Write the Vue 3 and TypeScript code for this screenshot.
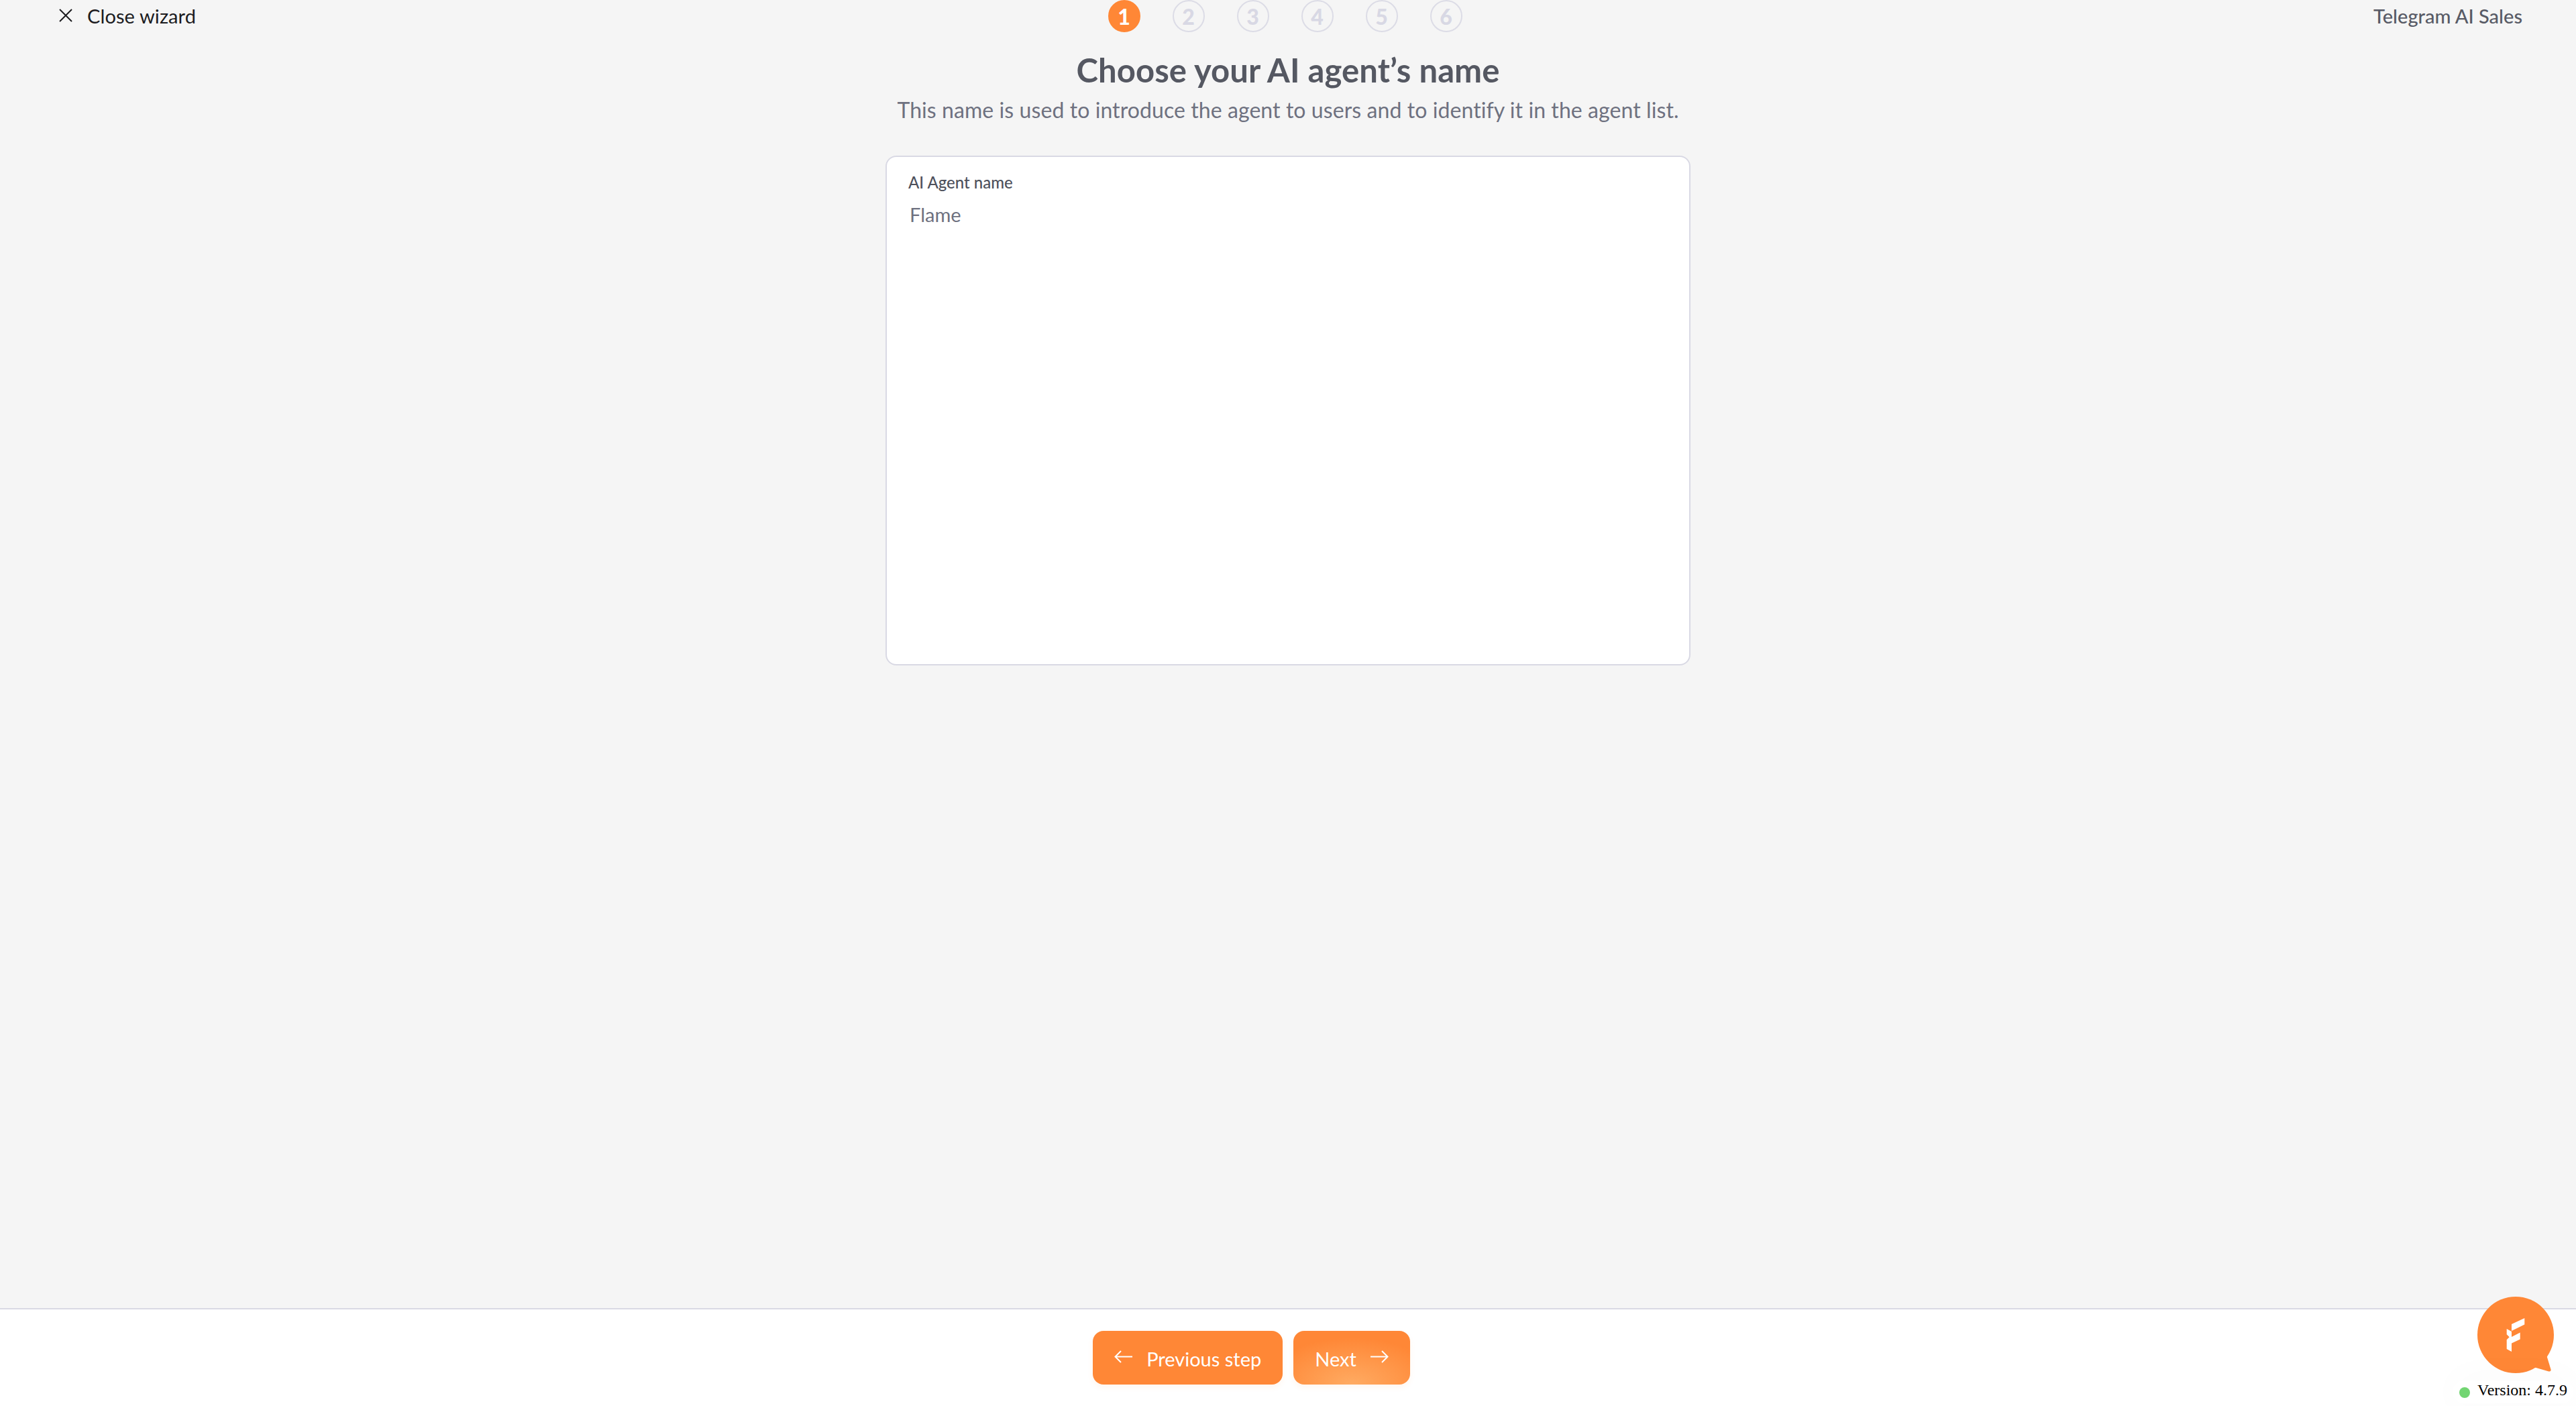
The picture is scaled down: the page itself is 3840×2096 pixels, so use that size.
<script setup lang="ts">
const steps = [1, 2, 3, 4, 5, 6]
</script>

<template>
  <div class="page">
    <header class="top">
      <div class="close">
        <svg class="close-icon" viewBox="0 0 20 20" width="20" height="20">
          <path d="M1 1L19 19M19 1L1 19" stroke="#1c1c1f" stroke-width="2" fill="none" />
        </svg>
        <span class="close-text">Close wizard</span>
      </div>
      <div class="steps">
        <div v-for="s in steps" :key="s" class="step" :class="{ active: s === 1 }">{{ s }}</div>
      </div>
      <div class="product">Telegram AI Sales</div>
    </header>

    <main class="main">
      <h1 class="title">Choose your AI agent’s name</h1>
      <p class="sub">This name is used to introduce the agent to users and to identify it in the agent list.</p>
      <div class="card">
        <div class="label">AI Agent name</div>
        <div class="value">Flame</div>
      </div>
    </main>

    <footer class="foot">
      <button class="btn">
        <svg viewBox="0 0 28 20" width="28" height="20"><path d="M27 9.5H2M10 1L1.5 9.5L10 18" stroke="#fff" stroke-width="2" fill="none" /></svg>
        <span>Previous step</span>
      </button>
      <button class="btn next">
        <span>Next</span>
        <svg viewBox="0 0 28 20" width="28" height="20"><path d="M1 9.5H26M18 1L26.5 9.5L18 18" stroke="#fff" stroke-width="2" fill="none" /></svg>
      </button>
    </footer>

    <div class="chat">
      <svg viewBox="0 0 116 116" width="116" height="116">
        <circle cx="58" cy="58" r="57" fill="#ff8736" />
        <path d="M104 88L110.5 109.5Q111 113 107.5 112.5L85 106Z" fill="#ff8736" />
        <path d="M52 42L71.3 33V42.5L52 52V61L64.7 54.5V64.5L52 70.5V83L44.7 79V65.3L48.7 61.3L44.7 57.3V49L52 53Z" fill="#fff" />
      </svg>
    </div>
    <div class="version"><i class="dot"></i><span class="vtext">Version: 4.7.9</span></div>
  </div>
</template>

<style>
html, body { margin: 0; background: #f5f5f5; }
</style>

<style scoped>
.page {
  position: relative;
  width: 3840px;
  height: 2096px;
  overflow: hidden;
  display: flex;
  flex-direction: column;
  background: #f5f5f5;
  font-family: Lato, sans-serif;
}
.top {
  display: flex;
  justify-content: space-between;
  align-items: center;
  height: 48px;
  padding: 0 80px;
}
.close {
  display: flex;
  align-items: center;
  gap: 22px;
  padding-left: 8px;
  font-size: 29px;
  letter-spacing: 0.1px;
  color: #1c1c1f;
}
.close-icon { margin-top: -3px; }
.close-text { margin-top: -2px; }
.steps { display: flex; gap: 48px; margin-left: 1px; }
.step {
  box-sizing: border-box;
  width: 48px;
  height: 48px;
  border-radius: 50%;
  border: 2px solid #dcdce6;
  display: flex;
  align-items: center;
  justify-content: center;
  font-size: 32px;
  font-weight: 900;
  color: #d8d8e4;
}
.step.active { background: #ff8736; border-color: #ff8736; color: #fff; }
.product { margin-top: -2px; font-size: 29px; font-weight: 500; color: #585b66; }
.main {
  flex: 1;
  display: flex;
  flex-direction: column;
  align-items: center;
}
.title {
  margin: 27px 0 0;
  font-size: 49px;
  line-height: 58px;
  letter-spacing: 0.1px;
  font-weight: 700;
  color: #555862;
}
.sub {
  margin: 9px 0 0;
  font-size: 32px;
  line-height: 44px;
  letter-spacing: 0.08px;
  color: #6e7180;
}
.card {
  box-sizing: border-box;
  width: 1200px;
  height: 760px;
  margin-top: 46px;
  padding: 20px 32px;
  background: #fff;
  border: 2px solid #d9d9e4;
  border-radius: 16px;
}
.label { font-size: 24px; line-height: 36px; font-weight: 500; color: #4e515c; }
.value { margin-top: 10px; padding-left: 2px; font-size: 29px; line-height: 40px; color: #6e7180; }
.foot {
  box-sizing: border-box;
  height: 146px;
  display: flex;
  justify-content: center;
  gap: 16px;
  padding: 32px 109px 0 0;
  background: #fff;
  border-top: 2px solid #d9d9e4;
}
.btn {
  box-sizing: border-box;
  height: 80px;
  display: flex;
  align-items: center;
  gap: 20px;
  padding: 0 32px;
  border: 0;
  border-radius: 16px;
  background: #ff8736;
  box-shadow: 0 4px 8px rgba(255, 135, 54, 0.08);
  color: #fff;
  font-family: Lato, sans-serif;
  font-size: 29px;
}
.btn svg { margin-top: -3px; }
.btn span { margin-top: 2px; }
.next {
  background: radial-gradient(ellipse 130px 70px at 50% 100%, #ffab62 0%, #ff8736 100%);
}
.chat { position: absolute; left: 3692px; top: 1932px; width: 116px; height: 116px; }
.chat svg { display: block; }
.version {
  position: absolute;
  left: 3656px;
  top: 2058px;
  box-sizing: border-box;
  width: 180px;
  height: 34px;
  display: flex;
  align-items: center;
  gap: 11px;
  padding-left: 10px;
  border-radius: 17px;
  background: #fff;
  box-shadow: 0 0 60px rgba(0, 0, 0, 0.03);
  font-family: "Liberation Serif", serif;
  font-size: 24px;
  color: #000;
}
.vtext { margin-top: -6px; }
.dot { width: 16px; height: 16px; margin-top: 2px; border-radius: 50%; background: #72d572; }
</style>
